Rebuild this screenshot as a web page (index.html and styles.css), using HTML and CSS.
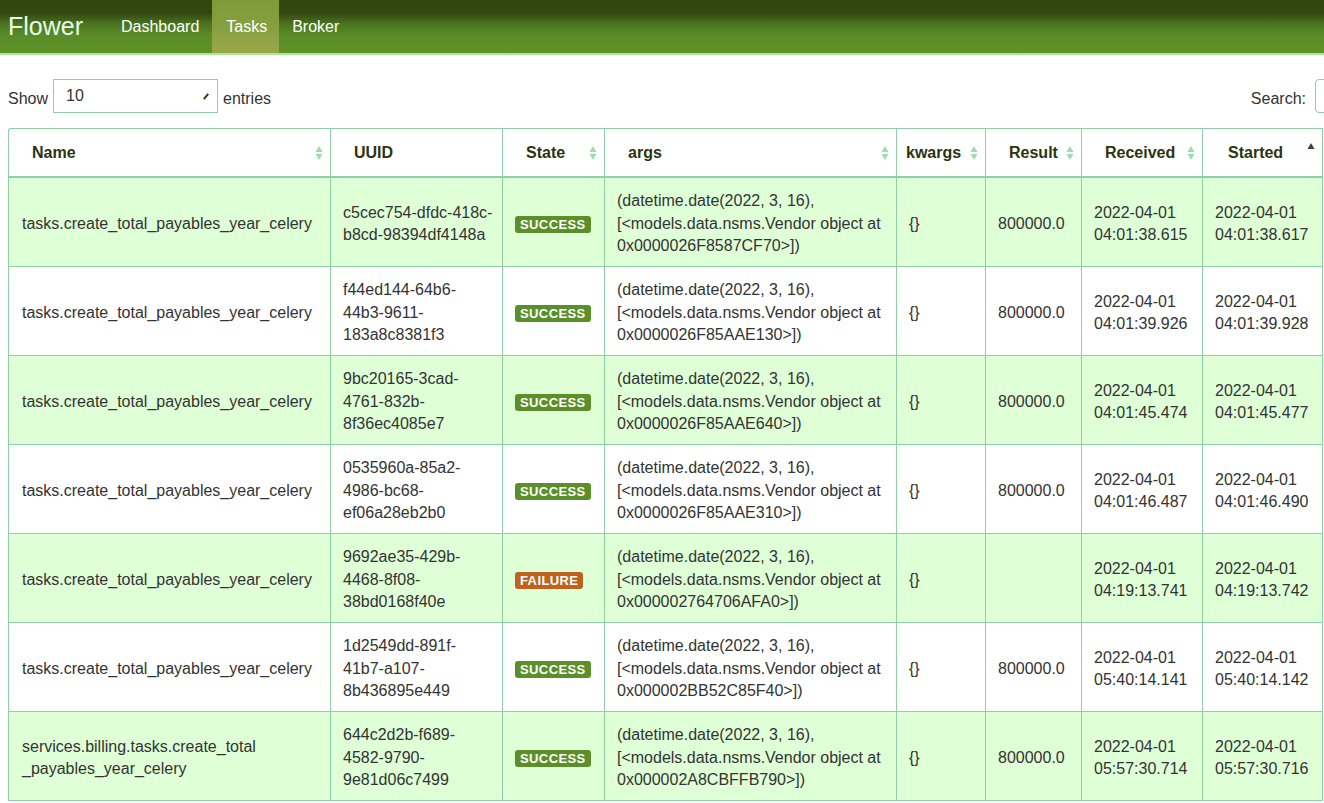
FILE: index.html
```html
<!DOCTYPE html>
<html>
<head>
<meta charset="utf-8">
<title>Flower</title>
<link rel="stylesheet" href="styles.css">
</head>
<body>
<nav class="navbar">
  <a class="brand">Flower</a>
  <ul class="nav">
    <li><a>Dashboard</a></li>
    <li class="active"><a>Tasks</a></li>
    <li><a>Broker</a></li>
  </ul>
</nav>
<main class="content">
  <div class="toolbar">
    <label class="length"><span class="lbl">Show</span> <span class="select"><span>10</span><i class="caret"></i></span> <span class="lbl">entries</span></label>
    <label class="search"><span class="lbl">Search:</span> <span class="search-input"></span></label>
  </div>
  <table class="tasks">
    <thead>
      <tr>
        <th class="c-name"><span>Name</span><svg class="sort" viewBox="0 0 8 16"><path d="M4 1 L7.5 7 L0.5 7 Z M4 15 L7.5 9 L0.5 9 Z"/></svg></th>
        <th class="c-uuid"><span>UUID</span></th>
        <th class="c-state"><span>State</span><svg class="sort" viewBox="0 0 8 16"><path d="M4 1 L7.5 7 L0.5 7 Z M4 15 L7.5 9 L0.5 9 Z"/></svg></th>
        <th class="c-args"><span>args</span><svg class="sort" viewBox="0 0 8 16"><path d="M4 1 L7.5 7 L0.5 7 Z M4 15 L7.5 9 L0.5 9 Z"/></svg></th>
        <th class="c-kwargs"><span>kwargs</span><svg class="sort" viewBox="0 0 8 16"><path d="M4 1 L7.5 7 L0.5 7 Z M4 15 L7.5 9 L0.5 9 Z"/></svg></th>
        <th class="c-result"><span>Result</span><svg class="sort" viewBox="0 0 8 16"><path d="M4 1 L7.5 7 L0.5 7 Z M4 15 L7.5 9 L0.5 9 Z"/></svg></th>
        <th class="c-received"><span>Received</span><svg class="sort" viewBox="0 0 8 16"><path d="M4 1 L7.5 7 L0.5 7 Z M4 15 L7.5 9 L0.5 9 Z"/></svg></th>
        <th class="c-started"><span>Started</span><svg class="sort asc" viewBox="0 0 8 16"><path d="M4 1 L7.5 7 L0.5 7 Z"/></svg></th>
      </tr>
    </thead>
    <tbody>
      <tr class="odd">
        <td class="name">tasks.create_total_payables_year_celery</td>
        <td class="uuid">c5cec754-dfdc-418c-<br>b8cd-98394df4148a</td>
        <td><span class="badge success">SUCCESS</span></td>
        <td>(datetime.date(2022, 3, 16), [&lt;models.data.nsms.Vendor object at 0x0000026F8587CF70&gt;])</td>
        <td>{}</td>
        <td>800000.0</td>
        <td>2022-04-01 04:01:38.615</td>
        <td>2022-04-01 04:01:38.617</td>
      </tr>
      <tr class="even">
        <td class="name">tasks.create_total_payables_year_celery</td>
        <td class="uuid">f44ed144-64b6-<br>44b3-9611-<br>183a8c8381f3</td>
        <td><span class="badge success">SUCCESS</span></td>
        <td>(datetime.date(2022, 3, 16), [&lt;models.data.nsms.Vendor object at 0x0000026F85AAE130&gt;])</td>
        <td>{}</td>
        <td>800000.0</td>
        <td>2022-04-01 04:01:39.926</td>
        <td>2022-04-01 04:01:39.928</td>
      </tr>
      <tr class="odd">
        <td class="name">tasks.create_total_payables_year_celery</td>
        <td class="uuid">9bc20165-3cad-<br>4761-832b-<br>8f36ec4085e7</td>
        <td><span class="badge success">SUCCESS</span></td>
        <td>(datetime.date(2022, 3, 16), [&lt;models.data.nsms.Vendor object at 0x0000026F85AAE640&gt;])</td>
        <td>{}</td>
        <td>800000.0</td>
        <td>2022-04-01 04:01:45.474</td>
        <td>2022-04-01 04:01:45.477</td>
      </tr>
      <tr class="even">
        <td class="name">tasks.create_total_payables_year_celery</td>
        <td class="uuid">0535960a-85a2-<br>4986-bc68-<br>ef06a28eb2b0</td>
        <td><span class="badge success">SUCCESS</span></td>
        <td>(datetime.date(2022, 3, 16), [&lt;models.data.nsms.Vendor object at 0x0000026F85AAE310&gt;])</td>
        <td>{}</td>
        <td>800000.0</td>
        <td>2022-04-01 04:01:46.487</td>
        <td>2022-04-01 04:01:46.490</td>
      </tr>
      <tr class="odd">
        <td class="name">tasks.create_total_payables_year_celery</td>
        <td class="uuid">9692ae35-429b-<br>4468-8f08-<br>38bd0168f40e</td>
        <td><span class="badge failure">FAILURE</span></td>
        <td>(datetime.date(2022, 3, 16), [&lt;models.data.nsms.Vendor object at 0x000002764706AFA0&gt;])</td>
        <td>{}</td>
        <td></td>
        <td>2022-04-01 04:19:13.741</td>
        <td>2022-04-01 04:19:13.742</td>
      </tr>
      <tr class="even">
        <td class="name">tasks.create_total_payables_year_celery</td>
        <td class="uuid">1d2549dd-891f-<br>41b7-a107-<br>8b436895e449</td>
        <td><span class="badge success">SUCCESS</span></td>
        <td>(datetime.date(2022, 3, 16), [&lt;models.data.nsms.Vendor object at 0x000002BB52C85F40&gt;])</td>
        <td>{}</td>
        <td>800000.0</td>
        <td>2022-04-01 05:40:14.141</td>
        <td>2022-04-01 05:40:14.142</td>
      </tr>
      <tr class="odd">
        <td class="name">services.billing.tasks.create_total<wbr>_payables_year_celery</td>
        <td class="uuid">644c2d2b-f689-<br>4582-9790-<br>9e81d06c7499</td>
        <td><span class="badge success">SUCCESS</span></td>
        <td>(datetime.date(2022, 3, 16), [&lt;models.data.nsms.Vendor object at 0x000002A8CBFFB790&gt;])</td>
        <td>{}</td>
        <td>800000.0</td>
        <td>2022-04-01 05:57:30.714</td>
        <td>2022-04-01 05:57:30.716</td>
      </tr>
    </tbody>
  </table>
</main>
</body>
</html>
```

FILE: styles.css
```css
html, body {
  margin: 0;
  padding: 0;
  overflow: hidden;
  background: #ffffff;
}
body {
  font-family: "Liberation Sans", Arial, sans-serif;
  font-size: 16px;
  color: #333333;
}
.navbar {
  height: 53px;
  display: flex;
  align-items: stretch;
  background: linear-gradient(to bottom, #324610 0%, #324610 24%, #4a7420 45%, #5a8d27 68%, #5e9228 100%);
  border-bottom: 2px solid #a6e6a6;
}
.brand {
  font-size: 25px;
  color: #e9fbe9;
  padding: 0 0 0 8px;
  display: flex;
  align-items: center;
  width: 100px;
}
.nav {
  list-style: none;
  margin: 0;
  padding: 0;
  display: flex;
}
.nav li {
  display: flex;
  align-items: center;
  padding: 0 13px;
  color: #ffffff;
  font-size: 16px;
}
.nav li.active {
  background: linear-gradient(to bottom, #7f9a38 0%, #86a041 50%, #9aa748 100%);
  padding: 0 12px 0 14px;
}
.content {
  padding: 24px 0 0 8px;
}
.toolbar {
  display: flex;
  justify-content: space-between;
  align-items: center;
  height: 34px;
  margin-bottom: 15px;
}
.length {
  display: flex;
  align-items: center;
  gap: 5px;
}
.lbl {
  padding-top: 6px;
}
.select {
  width: 165px;
  height: 34px;
  box-sizing: border-box;
  border: 1px solid #8fcfa8;
  display: flex;
  align-items: center;
  justify-content: space-between;
  padding: 0 10px 0 12px;
}
.caret {
  width: 2px;
  height: 7px;
  background: #2c3e10;
  transform: rotate(40deg);
  display: block;
}
.search {
  display: flex;
  align-items: center;
  gap: 9px;
}
.search-input {
  width: 40px;
  height: 34px;
  box-sizing: border-box;
  border: 1px solid #8fcfa8;
  border-radius: 4px;
  margin-right: -31px;
  display: block;
}
.tasks {
  border-collapse: separate;
  border-spacing: 0;
  table-layout: fixed;
  width: 1315px;
  border-left: 1px solid #8fcfa8;
  border-top: 1px solid #8fcfa8;
  border-top-left-radius: 3px;
}
.tasks th, .tasks td {
  box-sizing: border-box;
  border-right: 1px solid #8fcfa8;
  border-bottom: 1px solid #8fcfa8;
  text-align: left;
  vertical-align: middle;
}
.tasks th {
  height: 49px;
  border-bottom: 2px solid #8fcfa8;
  font-weight: bold;
  padding: 0 10px 0 23px;
  position: relative;
  color: #2a3410;
  white-space: nowrap;
}
.tasks th.c-kwargs {
  padding-left: 9px;
}
.tasks th.c-started {
  padding-left: 25px;
}
.sort {
  position: absolute;
  right: 7px;
  top: 16px;
  width: 8px;
  height: 16px;
  fill: #9edcae;
}
.sort.asc {
  fill: #2d4a3a;
  top: 13px;
}
.tasks td {
  height: 89px;
  padding: 4px 10px 0 12px;
  line-height: 22.5px;
}
.tasks td.name {
  padding-left: 13px;
}
.tasks td.uuid {
  white-space: nowrap;
}
.tasks tr.odd td {
  background: #dfffd7;
}
.tasks tr.even td {
  background: #ffffff;
}
.c-name { width: 322px; }
.c-uuid { width: 172px; }
.c-state { width: 102px; }
.c-args { width: 292px; }
.c-kwargs { width: 89px; }
.c-result { width: 96px; }
.c-received { width: 121px; }
.c-started { width: 120px; }
.badge {
  display: inline-block;
  font-size: 13px;
  font-weight: bold;
  color: #ffffff;
  line-height: 17px;
  padding: 0 5px;
  border-radius: 3px;
  letter-spacing: 0.4px;
}
.badge.success {
  background: #5b8f29;
}
.badge.failure {
  background: #be621e;
}
```
